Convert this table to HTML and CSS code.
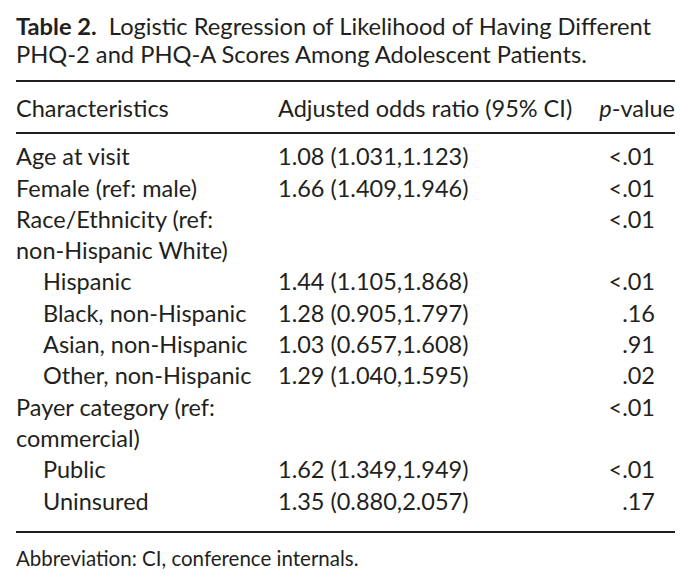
FILE: index.html
```html
<!DOCTYPE html>
<html lang="en">
<head>
<meta charset="utf-8">
<title>Table 2</title>
<link rel="stylesheet" href="styles.css">
</head>
<body>
<div class="page">
  <p class="caption"><span class="label">Table 2.</span>&nbsp; Logistic Regression of Likelihood of Having Different PHQ-2 and PHQ-A Scores Among Adolescent Patients.</p>
  <table class="data">
    <colgroup>
      <col class="w1">
      <col class="w2">
      <col class="w3">
    </colgroup>
    <thead>
      <tr>
        <th class="c1">Characteristics</th>
        <th class="c2">Adjusted odds ratio (95% CI)</th>
        <th class="c3"><i>p</i>-value</th>
      </tr>
    </thead>
    <tbody>
      <tr><td class="c1">Age at visit</td><td class="c2">1.08 (1.031,1.123)</td><td class="c3">&lt;.01</td></tr>
      <tr><td class="c1">Female (ref: male)</td><td class="c2">1.66 (1.409,1.946)</td><td class="c3">&lt;.01</td></tr>
      <tr><td class="c1">Race/Ethnicity (ref:<br>non-Hispanic White)</td><td class="c2"></td><td class="c3">&lt;.01</td></tr>
      <tr><td class="c1 sub">Hispanic</td><td class="c2">1.44 (1.105,1.868)</td><td class="c3">&lt;.01</td></tr>
      <tr><td class="c1 sub">Black, non-Hispanic</td><td class="c2">1.28 (0.905,1.797)</td><td class="c3">.16</td></tr>
      <tr><td class="c1 sub">Asian, non-Hispanic</td><td class="c2">1.03 (0.657,1.608)</td><td class="c3">.91</td></tr>
      <tr><td class="c1 sub">Other, non-Hispanic</td><td class="c2">1.29 (1.040,1.595)</td><td class="c3">.02</td></tr>
      <tr><td class="c1">Payer category (ref:<br>commercial)</td><td class="c2"></td><td class="c3">&lt;.01</td></tr>
      <tr><td class="c1 sub">Public</td><td class="c2">1.62 (1.349,1.949)</td><td class="c3">&lt;.01</td></tr>
      <tr><td class="c1 sub">Uninsured</td><td class="c2">1.35 (0.880,2.057)</td><td class="c3">.17</td></tr>
    </tbody>
  </table>
  <p class="note">Abbreviation: CI, conference internals.</p>
</div>
</body>
</html>
```

FILE: styles.css
```css
html, body {
  margin: 0;
  padding: 0;
  background: #ffffff;
}

.page {
  width: 692px;
  height: 582px;
  box-sizing: border-box;
  padding: 12px 17px 0 16px;
  font-family: "Lato", "Open Sans", sans-serif;
  color: #231f20;
  font-size: 23.5px;
  overflow: hidden;
}

.caption {
  margin: 0;
  font-size: 23.7px;
  line-height: 28px;
}

.caption .label {
  font-weight: 700;
}

.data {
  width: 659px;
  table-layout: fixed;
  border-collapse: collapse;
  margin-top: 12px;
  line-height: 31.3px;
}

.w1 { width: 262px; }
.w2 { width: 300px; }
.w3 { width: 97px; }

.data thead tr {
  border-top: 2px solid #231f20;
  border-bottom: 2px solid #231f20;
}

.data tbody {
  border-bottom: 2px solid #231f20;
}

.data th {
  font-weight: 400;
  text-align: left;
  padding: 11px 0 8px 0;
  vertical-align: top;
  white-space: nowrap;
}

.data td {
  padding: 0;
  vertical-align: top;
  white-space: nowrap;
}

.data tbody tr:first-child td {
  padding-top: 7px;
}

.data tbody tr:last-child td {
  padding-bottom: 14px;
}

.data td.sub {
  padding-left: 27px;
}

.data th.c3 {
  text-align: right;
}

.data td.c3 {
  text-align: right;
  padding-right: 20px;
}

.note {
  margin: 11px 0 0 0;
  font-size: 20.5px;
  line-height: 28px;
}
```
